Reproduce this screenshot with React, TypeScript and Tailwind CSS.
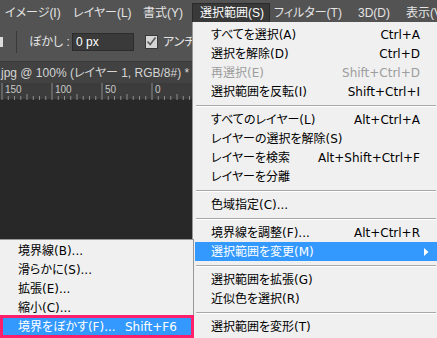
import React from 'react';

// --- MENU DATA ---

type Item = { t: string; k?: string; dis?: boolean; sub?: boolean; active?: boolean } | 'sep';

const SELECT_MENU: Item[] = [
  { t: 'すべてを選択(A)', k: 'Ctrl+A' },
  { t: '選択を解除(D)', k: 'Ctrl+D' },
  { t: '再選択(E)', k: 'Shift+Ctrl+D', dis: true },
  { t: '選択範囲を反転(I)', k: 'Shift+Ctrl+I' },
  'sep',
  { t: 'すべてのレイヤー(L)', k: 'Alt+Ctrl+A' },
  { t: 'レイヤーの選択を解除(S)' },
  { t: 'レイヤーを検索', k: 'Alt+Shift+Ctrl+F' },
  { t: 'レイヤーを分離' },
  'sep',
  { t: '色域指定(C)...' },
  'sep',
  { t: '境界線を調整(F)...', k: 'Alt+Ctrl+R' },
  { t: '選択範囲を変更(M)', sub: true, active: true },
  'sep',
  { t: '選択範囲を拡張(G)' },
  { t: '近似色を選択(R)' },
  'sep',
  { t: '選択範囲を変形(T)' },
];

const MODIFY_MENU = [
  { t: '境界線(B)...' },
  { t: '滑らかに(S)...' },
  { t: '拡張(E)...' },
  { t: '縮小(C)...' },
  { t: '境界をぼかす(F)...', k: 'Shift+F6', active: true },
];

const MENUBAR = [
  { t: 'イメージ(I)', w: 'w-[66px] pl-[5px]' },
  { t: 'レイヤー(L)', w: 'w-[70px] pl-[7px]' },
  { t: '書式(Y)', w: 'w-[56px] pl-[7px]' },
  { t: '選択範囲(S)', w: 'w-[78px] pl-[7px]', open: true },
  { t: 'フィルター(T)', w: 'w-[81px] pl-[4px]' },
  { t: '3D(D)', w: 'w-[48px] pl-[7px]' },
  { t: '表示(V)', w: 'w-[60px] pl-[7px]' },
];

const uiFont = "font-['Liberation_Sans','Noto_Sans_CJK_JP',sans-serif] [font-feature-settings:'palt']";
const menuFont = "font-['DejaVu_Sans','Noto_Sans_CJK_JP',sans-serif] [font-feature-settings:'palt']";

// --- PIECES ---

const Ruler = () => {
  const ticks: React.ReactNode[] = [];
  for (let i = 0; i <= 32; i++) {
    const x = 2 + i * 6.25;
    const major = i % 8 === 0;
    const mid = i % 4 === 0;
    ticks.push(
      <line key={i} x1={x} x2={x} y1={major ? 0 : mid ? 11 : 13} y2={17} stroke="#8a8a8a" strokeWidth={1} />
    );
  }
  return (
    <div className="relative h-[17px] bg-[#3c3c3c] border-b border-[#2a2a2a]">
      <svg className="absolute inset-0" width="437" height="17">{ticks}</svg>
      <div className={`relative flex text-[10px] leading-[13px] text-[#c8c8c8] ${uiFont}`}>
        {['150', '100', '50', '0'].map(n => (
          <span key={n} className="w-[50px] pl-[5px]">{n}</span>
        ))}
      </div>
    </div>
  );
};

const MenuRow: React.FC<{ t: string; k?: string; dis?: boolean; sub?: boolean; active?: boolean }> = ({ t, k, dis, sub, active }) => (
  <div className={`h-[19px] flex items-center justify-between pl-[16px] pr-[17px] relative ${active ? 'bg-[#3399ff] text-white' : dis ? 'text-[#9d9d9d]' : 'text-black'}`}>
    <span className="whitespace-nowrap">{t}</span>
    {k && <span className="whitespace-nowrap">{k}</span>}
    {sub && (
      <svg className="absolute right-[8px] top-[6px]" width="5" height="8" viewBox="0 0 5 8">
        <path d="M0 0 L4.5 4 L0 8 Z" fill="#ffffff" />
      </svg>
    )}
  </div>
);

const Sep = () => (
  <div className="h-[9px] flex flex-col justify-center px-[1px]">
    <div className="h-px bg-[#a8a8a8]" />
    <div className="h-px bg-white" />
  </div>
);

// --- MAIN ---

export default function App() {
  return (
    <div className="w-[437px] h-[338px] relative overflow-hidden bg-[#282828] flex flex-col">
      {/* menu bar */}
      <div className={`h-[22px] flex items-end overflow-hidden bg-[#535353] text-[12px] text-[#e4e4e4] ${uiFont}`}>
        {MENUBAR.map(m => (
          <div
            key={m.t}
            className={`${m.w} h-[19px] flex items-center shrink-0 whitespace-nowrap ${m.open ? 'bg-[#393939] border border-b-0 border-[#2a2a2a] text-white' : ''}`}
          >
            {m.t}
          </div>
        ))}
      </div>

      {/* options bar */}
      <div className={`h-[40px] flex items-center bg-[#535353] border-b border-[#3a3a3a] text-[12px] text-[#e4e4e4] ${uiFont}`}>
        <div className="w-[3px] h-[10px] bg-[#dcdcdc] mr-[13px]" />
        <div className="w-px h-[22px] bg-[#3a3a3a] mr-[12px]" />
        <span className="w-[43px] whitespace-nowrap">ぼかし :</span>
        <div className="w-[62px] h-[18px] bg-[#3a3a3a] border border-[#2c2c2c] flex items-center pl-[3px] text-white">0 px</div>
        <div className="ml-[11px] w-[13px] h-[14px] bg-[#d6d6d6] border border-[#3a3a3a] flex items-center justify-center">
          <svg width="11" height="11" viewBox="0 0 11 11">
            <path d="M1.5 5.5 L4.2 8.5 L9.5 1.5" fill="none" stroke="#5a5a5a" strokeWidth="1.6" />
          </svg>
        </div>
        <span className="ml-[5px] whitespace-nowrap">アンチ</span>
      </div>

      {/* document tab */}
      <div className={`h-[21px] flex items-center bg-[#424242] text-[12px] text-[#d4d4d4] whitespace-nowrap ${uiFont}`}>
        <span className="pl-[1px]">jpg @ 100% (レイヤー 1, RGB/8#) *</span>
      </div>

      <Ruler />

      <div className="flex-1 bg-[#282828]" />

      {/* 選択範囲 dropdown */}
      <div className={`absolute left-[192px] top-[22px] w-[247px] h-[330px] bg-[#f0f0f0] border-l border-[#979797] pt-[3px] px-[2px] text-[12px] ${menuFont}`}>
        {SELECT_MENU.map((it, i) => (it === 'sep' ? <Sep key={i} /> : <MenuRow key={i} {...it} />))}
      </div>

      {/* 選択範囲を変更 submenu */}
      <div className={`absolute left-0 top-[239px] w-[194px] h-[110px] bg-[#f0f0f0] border-t border-r border-[#979797] pt-[1px] px-[2px] text-[12px] ${menuFont}`}>
        {MODIFY_MENU.map(it => (
          <div key={it.t} className={`h-[19px] flex items-center pl-[16px] ${it.active ? 'bg-[#3399ff] text-white' : 'text-black'}`}>
            <span className="w-[107px] whitespace-nowrap">{it.t}</span>
            {it.k && <span className="whitespace-nowrap">{it.k}</span>}
          </div>
        ))}
      </div>

      {/* annotation frame */}
      <div className="absolute left-0 top-[315px] w-[194px] h-[23px] border-[3px] border-[#ff1f6b]" />
    </div>
  );
}
